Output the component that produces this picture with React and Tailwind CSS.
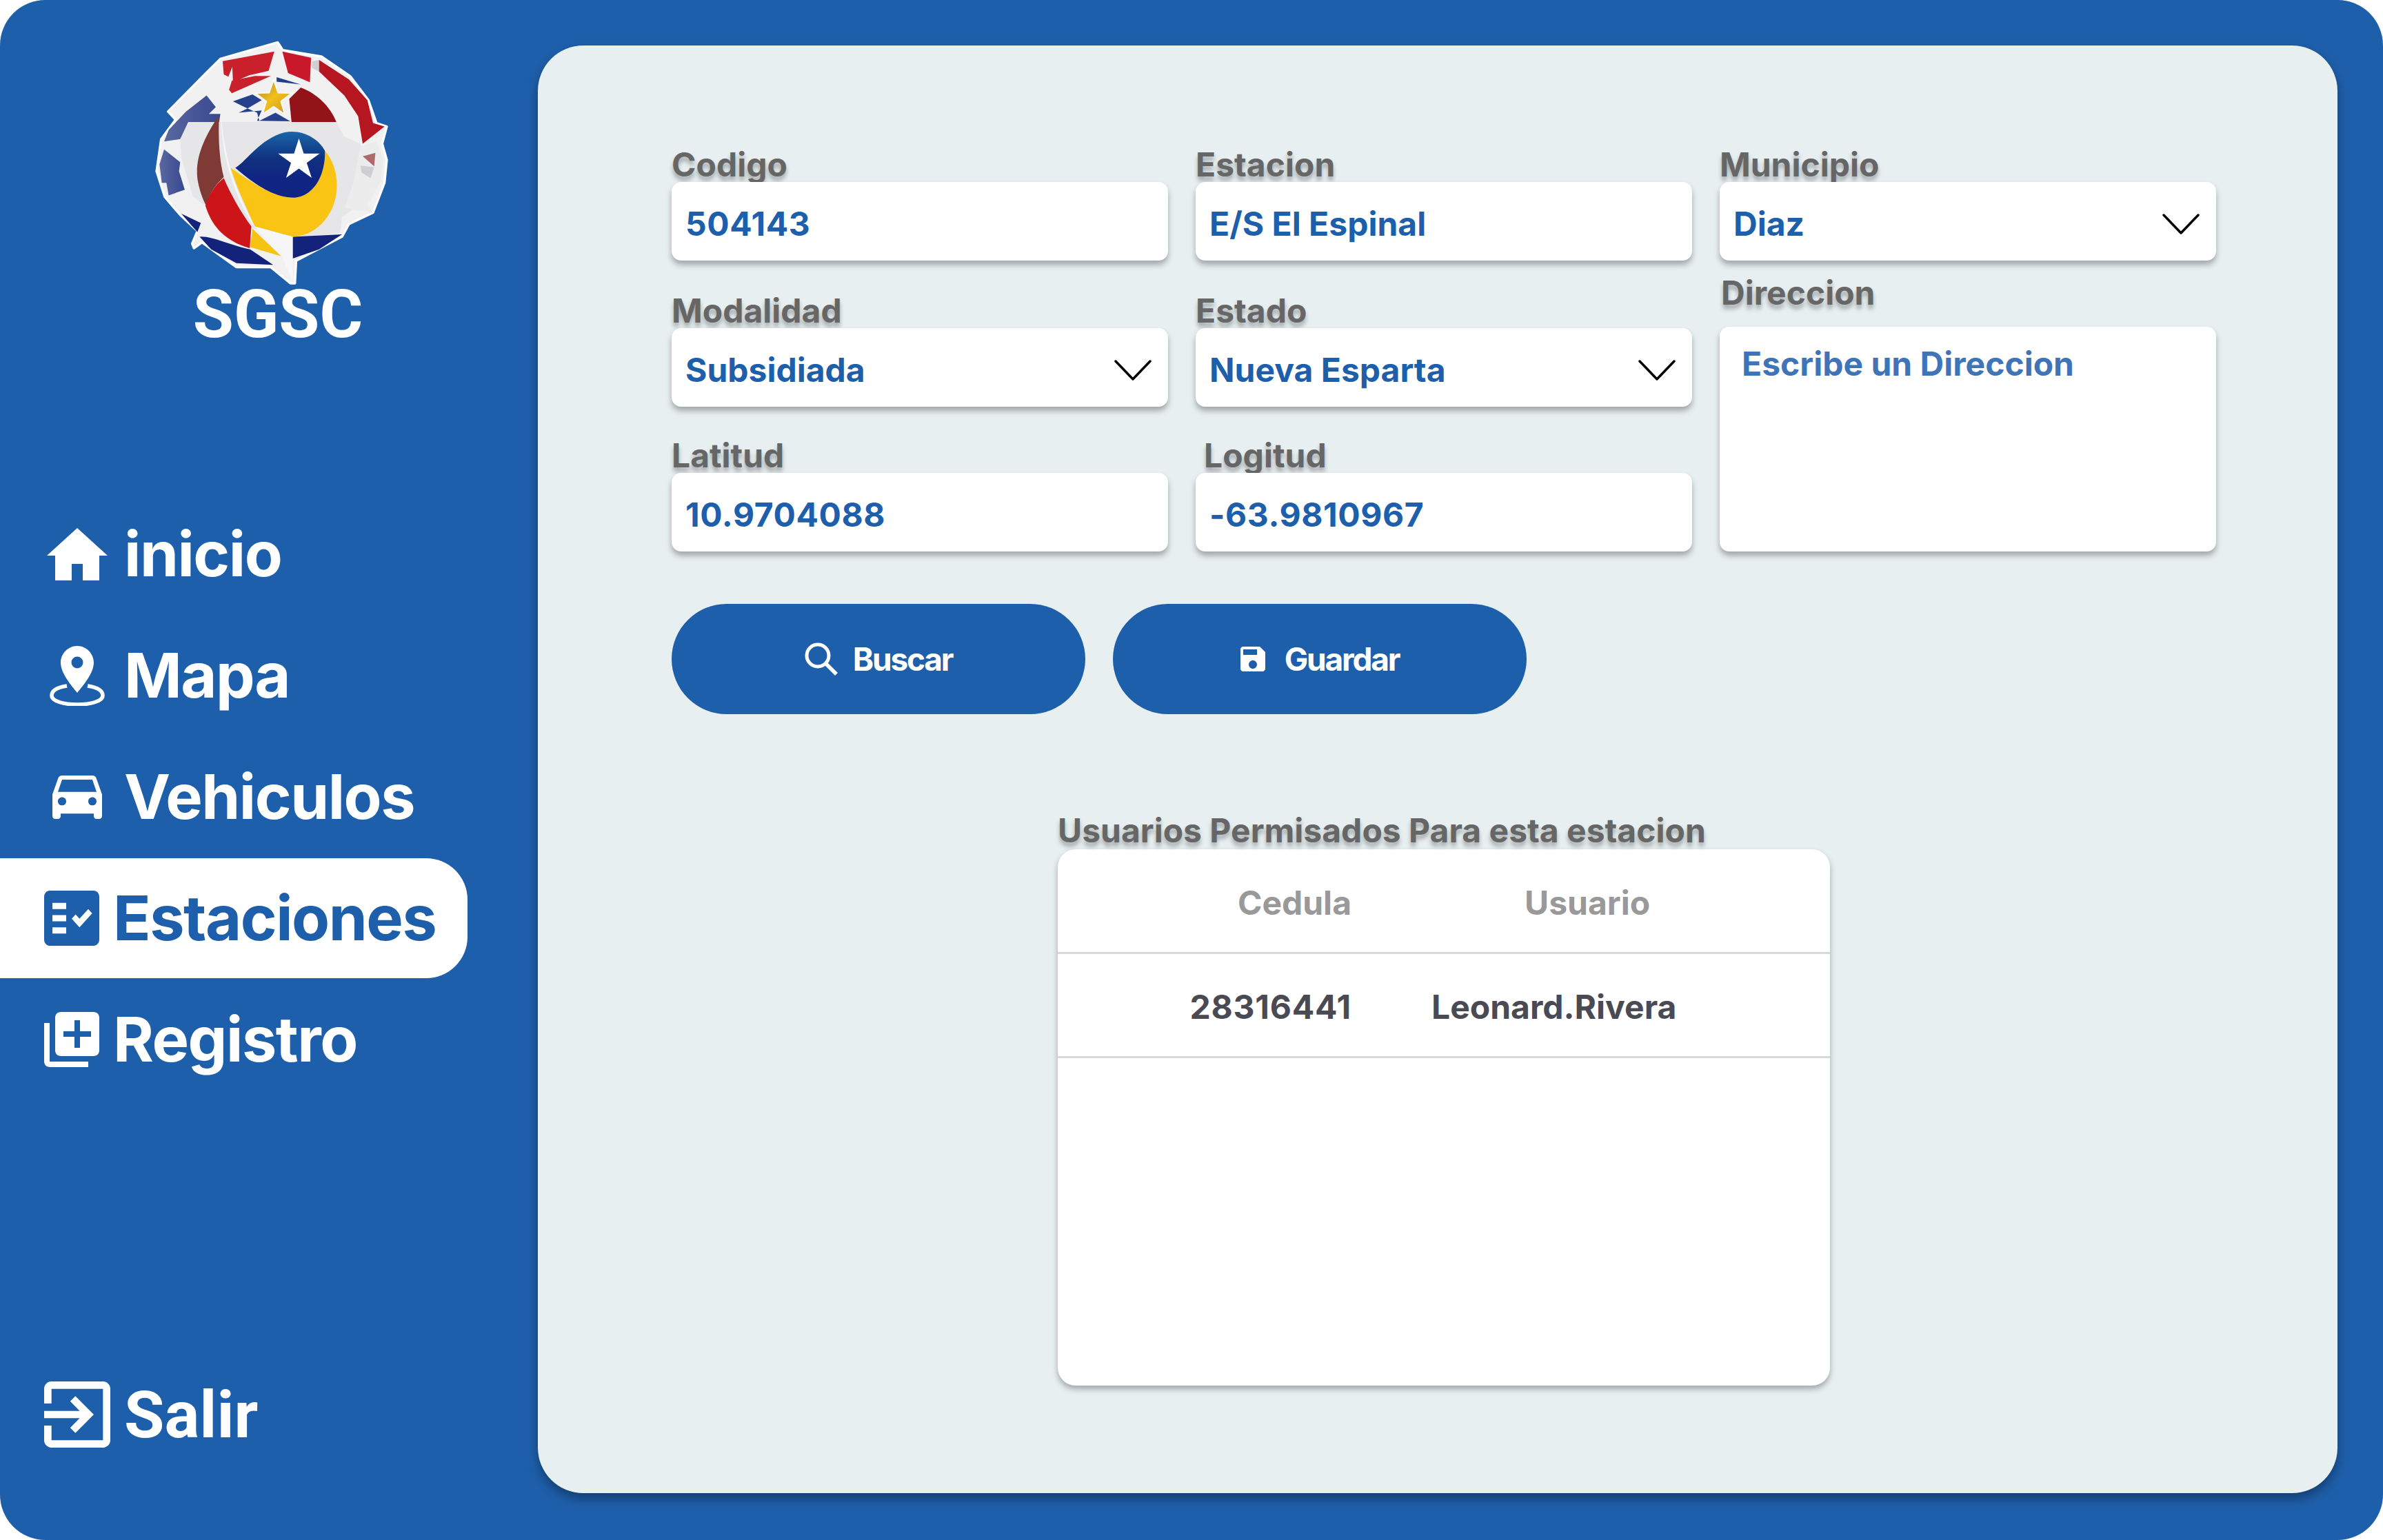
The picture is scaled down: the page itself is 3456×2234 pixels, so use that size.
const BLUE = "#1e5fab";

function Logo() {
  const star = (cx, cy, R, r) => {
    const p = [];
    for (let i = 0; i < 10; i++) {
      const a = -Math.PI / 2 + (i * Math.PI) / 5;
      const d = i % 2 ? r : R;
      p.push(`${(cx + d * Math.cos(a)).toFixed(1)},${(cy + d * Math.sin(a)).toFixed(1)}`);
    }
    return p.join(" ");
  };
  return (
    <svg viewBox="130 75 1030 1075" width="343" height="358" className="block">
      <defs>
        <linearGradient id="navy" x1="0.5" y1="0" x2="0.5" y2="0.75">
          <stop offset="0" stopColor="#1a66a8" />
          <stop offset="0.55" stopColor="#10307f" />
          <stop offset="1" stopColor="#0f2483" />
        </linearGradient>
        <linearGradient id="gold" x1="0" y1="0" x2="1" y2="1">
          <stop offset="0" stopColor="#b58a2a" />
          <stop offset="0.5" stopColor="#f2c01c" />
          <stop offset="1" stopColor="#c9951d" />
        </linearGradient>
        <linearGradient id="fadeBlue" x1="0" y1="0" x2="1" y2="0">
          <stop offset="0" stopColor="#5a689f" />
          <stop offset="1" stopColor="#38488f" />
        </linearGradient>
      </defs>
      <path
        d="M670 88 L692 122 L860 150 L985 235 L1065 340 L1100 440 L1145 455 L1125 530 L1145 600 L1135 700 L1085 830 L980 880 L950 935 L750 1040 L745 1138 L725 1138 L640 1068 L490 1068 L340 960 L305 985 L297 965 L320 910 L245 840 L178 762 L142 650 L162 510 L225 425 L192 390 L360 220 L420 160 Z"
        fill="#f1f1f2" stroke="#ffffff" strokeWidth="10" strokeLinejoin="round"
      />
      <path d="M245 500 L280 435 L925 435 L960 500 L1030 530 L1060 640 L1030 790 L950 850 L940 920 L750 935 L560 900 L380 820 L300 760 L250 590 Z" fill="#e6e6e9" />
      <path d="M1030 540 L1100 520 L1130 600 L1120 690 L1060 800 L1085 830 L960 810 L1000 700 Z" fill="#ececed" />
      <path d="M820 170 L850 165 L850 215 L820 200 Z" fill="#cfcfd1" />
      <path d="M430 170 L655 128 L630 212 L545 232 L475 262 L472 195 L455 238 L435 228 Z" fill="#c9202c" />
      <path d="M690 128 L815 155 L810 262 L715 222 Z" fill="#c9182a" />
      <path d="M850 165 L980 250 L1060 340 L1085 440 L1135 455 L1040 530 L1020 410 L960 320 L850 215 Z" fill="#b5161f" />
      <path d="M670 95 L625 245 L705 245 Z" fill="#f1f1f2" />
      <path d="M470 255 L570 235 L640 235 L560 270 L470 310 L458 295 Z" fill="#c9202c" />
      <path d="M770 285 L720 335 L730 435 L925 435 C900 370 840 310 770 285 Z" fill="#921318" />
      <path d="M665 240 L770 272 L665 260 Z" fill="#1d3f8f" />
      <path d="M475 345 L560 315 L600 340 L540 375 L500 395 L600 385 L580 430 L725 432 L660 395 L590 430 L580 395 L525 370 Z" fill="#26428f" />
      <path d="M360 320 L400 370 L370 400 L420 400 L415 435 L280 435 L245 510 L175 520 L195 470 L270 390 Z" fill="url(#fadeBlue)" />
      <path d="M175 555 L245 610 L240 650 L265 730 L195 755 L185 700 L165 700 L155 620 Z" fill="url(#fadeBlue)" />
      <polygon points={star(652, 335, 92, 38)} fill="#f7f7f7" />
      <polygon points={star(652, 335, 74, 30)} fill="url(#gold)" />
      <path d="M415 405 C350 500 310 590 320 680 C325 720 345 780 360 800 C370 740 410 700 435 675 C415 600 410 500 415 405 Z" fill="#7f3a36" />
      <path d="M435 680 C395 710 365 760 355 800 C380 880 430 950 548 985 L555 890 C510 830 465 750 435 680 Z" fill="#cb1518" />
      <path d="M560 900 L550 980 L685 1020 Z" fill="#f7c313" />
      <path d="M330 935 C380 930 470 975 550 990 L650 1058 L490 1050 L380 990 Z" fill="#13227a" />
      <path d="M735 935 L950 925 L850 990 L735 1030 Z" fill="#13227a" />
      <path d="M250 835 L335 875 L320 915 Z" fill="#13227a" />
      <path d="M465 635 C560 700 650 765 740 765 C830 760 880 660 875 560 C945 640 950 790 860 880 C820 920 770 935 735 935 L570 890 C530 800 490 720 465 635 Z" fill="#f9c414" />
      <path d="M485 635 C540 600 590 510 700 480 C780 465 850 510 875 560 C880 660 830 760 740 765 C650 765 560 700 485 635 Z" fill="url(#navy)" />
      <polygon points={star(762, 602, 95, 36)} fill="#ffffff" />
      <path d="M425 420 C420 560 480 760 560 880 L690 1025 L735 1130 L735 935 L570 890 C500 760 440 620 425 420 Z" fill="#f6f6f6" />
      <path d="M1040 585 L1095 570 L1090 628 Z" fill="#b06a6c" />
      <path d="M1030 625 L1090 632 L1075 680 L1035 655 Z" fill="#cfcfd1" />
    </svg>
  );
}

function HomeIcon() {
  return (
    <svg width="88" height="76" viewBox="0 0 88 76" fill="#fff">
      <path d="M0 40 L44 0 L88 40 L76 40 L76 76 L52 76 L52 52 L36 52 L36 76 L12 76 L12 40 Z" />
    </svg>
  );
}
function PinIcon() {
  return (
    <svg width="80" height="87" viewBox="0 0 80 87">
      <path fillRule="evenodd" fill="#fff" d="M40 0 C53 0 64 11 64 24 C64 40 48 58 40 68 C32 58 16 40 16 24 C16 11 27 0 40 0 Z M40 15.500 A8.500 8.500 0 1 0 40 32.500 A8.500 8.500 0 1 0 40 15.500 Z" />
      <path d="M25 58 C12 60 3 64 3 72 C3 80 20 85 40 85 C60 85 77 80 77 72 C77 64 68 60 55 58" fill="none" stroke="#fff" strokeWidth="5.500" />
    </svg>
  );
}
function CarIcon() {
  return (
    <svg width="72" height="63" viewBox="3 5 18 16" preserveAspectRatio="none" fill="#fff">
      <path d="M18.92 6.01C18.72 5.42 18.16 5 17.5 5h-11c-.66 0-1.21.42-1.42 1.01L3 12v8c0 .55.45 1 1 1h1c.55 0 1-.45 1-1v-1h12v1c0 .55.45 1 1 1h1c.55 0 1-.45 1-1v-8l-2.08-5.990zM6.500 16c-.83 0-1.500-.67-1.500-1.500S5.670 13 6.500 13s1.500.67 1.500 1.500S7.330 16 6.500 16zm11 0c-.83 0-1.500-.67-1.500-1.500s.67-1.500 1.500-1.500 1.500.67 1.500 1.500-.67 1.500-1.500 1.500zM5 11l1.500-4.500h11L19 11H5z" />
    </svg>
  );
}
function FactIcon() {
  return (
    <svg width="80" height="80" viewBox="2 3 20 18" preserveAspectRatio="none" fill={BLUE}>
      <path fillRule="evenodd" d="M20 3H4c-1.100 0-2 .9-2 2v14c0 1.100.9 2 2 2h16c1.100 0 2-.9 2-2V5c0-1.100-.9-2-2-2zM10 17H5v-2h5v2zm0-4H5v-2h5v2zm0-4H5V7h5v2zm4.820 6L12 12.160l1.410-1.410 1.410 1.420L17.990 9l1.420 1.420L14.820 15z" />
    </svg>
  );
}
function AddIcon() {
  return (
    <svg width="80" height="80" viewBox="2 2 20 20" preserveAspectRatio="none" fill="#fff">
      <path d="M4 6H2v14c0 1.100.9 2 2 2h14v-2H4V6zm16-4H8c-1.100 0-2 .9-2 2v12c0 1.100.9 2 2 2h12c1.100 0 2-.9 2-2V4c0-1.100-.9-2-2-2zm-1 9h-4v4h-2v-4H9V9h4V5h2v4h4v2z" />
    </svg>
  );
}
function ExitIcon() {
  return (
    <svg width="96" height="96" viewBox="3 3 18 18" fill="#fff">
      <path d="M10.090 15.590L11.500 17l5-5-5-5-1.410 1.410L12.670 11H3v2h9.670l-2.580 2.590zM19 3H5c-1.110 0-2 .9-2 2v4h2V5h14v14H5v-4H3v4c0 1.100.89 2 2 2h14c1.100 0 2-.9 2-2V5c0-1.100-.9-2-2-2z" />
    </svg>
  );
}
function SearchIcon() {
  return (
    <svg width="48" height="48" viewBox="0 0 48 48" fill="none" stroke="#fff" strokeWidth="5">
      <circle cx="19" cy="19" r="16" />
      <path d="M31 31 L46 46" strokeWidth="5.500" />
    </svg>
  );
}
function SaveIcon() {
  return (
    <svg width="36" height="36" viewBox="3 3 18 18" fill="#fff">
      <path d="M17 3H5c-1.110 0-2 .9-2 2v14c0 1.100.89 2 2 2h14c1.100 0 2-.9 2-2V7l-4-4zm-5 16c-1.660 0-3-1.340-3-3s1.340-3 3-3 3 1.340 3 3-1.340 3-3 3zm3-10H5V5h10v4z" />
    </svg>
  );
}
function Chevron() {
  return (
    <svg width="54" height="30" viewBox="0 0 54 30" fill="none" stroke="#000" strokeWidth="3.500" strokeLinecap="round" strokeLinejoin="round">
      <path d="M2 2 L27 28 L52 2" />
    </svg>
  );
}

function NavItem({ icon, label, active, wide }) {
  return (
    <div className={`mb-[2px] flex h-[174px] w-[678px] items-center rounded-r-[60px] ${active ? "bg-white text-[#1e5fab]" : "text-white"}`}>
      {wide ? (
        <div className="mr-[16px] ml-[60px] flex w-[104px] shrink-0 items-center justify-center">{icon}</div>
      ) : (
        <div className="mr-[20px] ml-[64px] flex w-[80px] shrink-0 items-center justify-center">{icon}</div>
      )}
      <span className="text-[90px] leading-none font-bold tracking-[-1.5px]">{label}</span>
    </div>
  );
}

function Field({ label, value, select, digits, labelClass = "", className = "" }) {
  return (
    <div className={`flex flex-col ${className}`}>
      <div className={`h-[58px] text-[48px] leading-[66px] font-bold text-[#666666] [text-shadow:0_6px_6px_rgba(0,0,0,0.3)] ${labelClass}`}>{label}</div>
      <div className={`flex h-[114px] items-center justify-between rounded-[14px] bg-white pt-[8px] pr-[24px] pl-[20px] text-[48px] font-bold text-[#1e5fab] shadow-[0_6px_8px_rgba(0,0,0,0.3)] ${digits ? "tracking-[0.6px]" : ""}`}>
        <span>{value}</span>
        {select && <Chevron />}
      </div>
    </div>
  );
}

export default function App() {
  return (
    <div className="flex h-[2234px] w-[3456px] overflow-hidden rounded-[66px] bg-[#1e5fab] font-[Inter,sans-serif]">
      <aside className="flex w-[780px] shrink-0 flex-col">
        <div className="flex w-[806px] flex-col items-center pt-[57px]">
          <div className="mr-[18px]"><Logo /></div>
          <div className="mt-[-11px] font-[Roboto,sans-serif] text-[96px] leading-[104px] font-bold text-white">SGSC</div>
        </div>
        <nav className="mt-[209px] flex flex-col">
          <NavItem icon={<HomeIcon />} label="inicio" wide />
          <NavItem icon={<PinIcon />} label="Mapa" wide />
          <NavItem icon={<CarIcon />} label="Vehiculos" wide />
          <NavItem icon={<FactIcon />} label="Estaciones" active />
          <NavItem icon={<AddIcon />} label="Registro" />
        </nav>
        <div className="mt-auto mb-[134px] ml-[64px] flex items-center gap-[20px] text-white">
          <ExitIcon />
          <span className="font-[Roboto,sans-serif] text-[95px] leading-none font-bold">Salir</span>
        </div>
      </aside>

      <main className="mt-[66px] mr-[66px] mb-[68px] flex-1 rounded-[66px] bg-[#e7eff1] pt-[140px] pr-[176px] pl-[194px] shadow-[0_8px_16px_rgba(0,0,0,0.35)]">
        <div className="flex gap-[40px]">
          <div className="flex w-[720px] flex-col">
            <Field label="Codigo" value="504143" digits />
            <Field label="Modalidad" value="Subsidiada" select className="mt-[40px]" />
            <Field label="Latitud" value="10.9704088" digits className="mt-[38px]" />
          </div>
          <div className="flex w-[720px] flex-col">
            <Field label="Estacion" value="E/S El Espinal" />
            <Field label="Estado" value="Nueva Esparta" select className="mt-[40px]" />
            <Field label="Logitud" value="-63.9810967" digits labelClass="pl-[12px]" className="mt-[38px]" />
          </div>
          <div className="flex w-[720px] flex-col">
            <Field label="Municipio" value="Diaz" select />
            <div className="mt-[14px] mb-[24px] h-[58px] pl-[2px] text-[48px] leading-[66px] font-bold text-[#666666] [text-shadow:0_6px_6px_rgba(0,0,0,0.3)]">Direccion</div>
            <div className="h-[326px] rounded-[14px] bg-white px-[32px] pt-[22px] text-[48px] leading-[64px] font-bold text-[#3f74b8] shadow-[0_6px_8px_rgba(0,0,0,0.3)]">Escribe un Direccion</div>
          </div>
        </div>

        <div className="mt-[76px] flex gap-[40px]">
          <div className="flex h-[160px] w-[600px] items-center justify-center gap-[22px] rounded-full bg-[#1e5fab] text-[46px] font-bold tracking-[-2.200px] text-white">
            <SearchIcon />
            <span>Buscar</span>
          </div>
          <div className="flex h-[160px] w-[600px] items-center justify-center gap-[28px] rounded-full bg-[#1e5fab] text-[46px] font-bold tracking-[-2.200px] text-white">
            <SaveIcon />
            <span>Guardar</span>
          </div>
        </div>

        <div className="mx-auto mt-[138px] w-[1120px]">
          <div className="h-[58px] text-[48px] leading-[62px] font-bold whitespace-nowrap text-[#666666] [text-shadow:0_6px_6px_rgba(0,0,0,0.3)]">Usuarios Permisados Para esta estacion</div>
          <div className="h-[778px] rounded-[26px] bg-white shadow-[0_5px_8px_rgba(0,0,0,0.3)]">
            <div className="flex h-[152px] items-center border-b-[3px] border-[#d9d9d9] pt-[6px] text-[48px] font-bold text-[#999999]">
              <div className="w-[426px] text-right">Cedula</div>
              <div className="pl-[251px]">Usuario</div>
            </div>
            <div className="flex h-[151px] items-center border-b-[3px] border-[#d9d9d9] pt-[6px] text-[48px] font-bold text-[#4a4a55]">
              <div className="w-[426px] text-right tracking-[0.8px]">28316441</div>
              <div className="pl-[116px]">Leonard.Rivera</div>
            </div>
          </div>
        </div>
      </main>
    </div>
  );
}
